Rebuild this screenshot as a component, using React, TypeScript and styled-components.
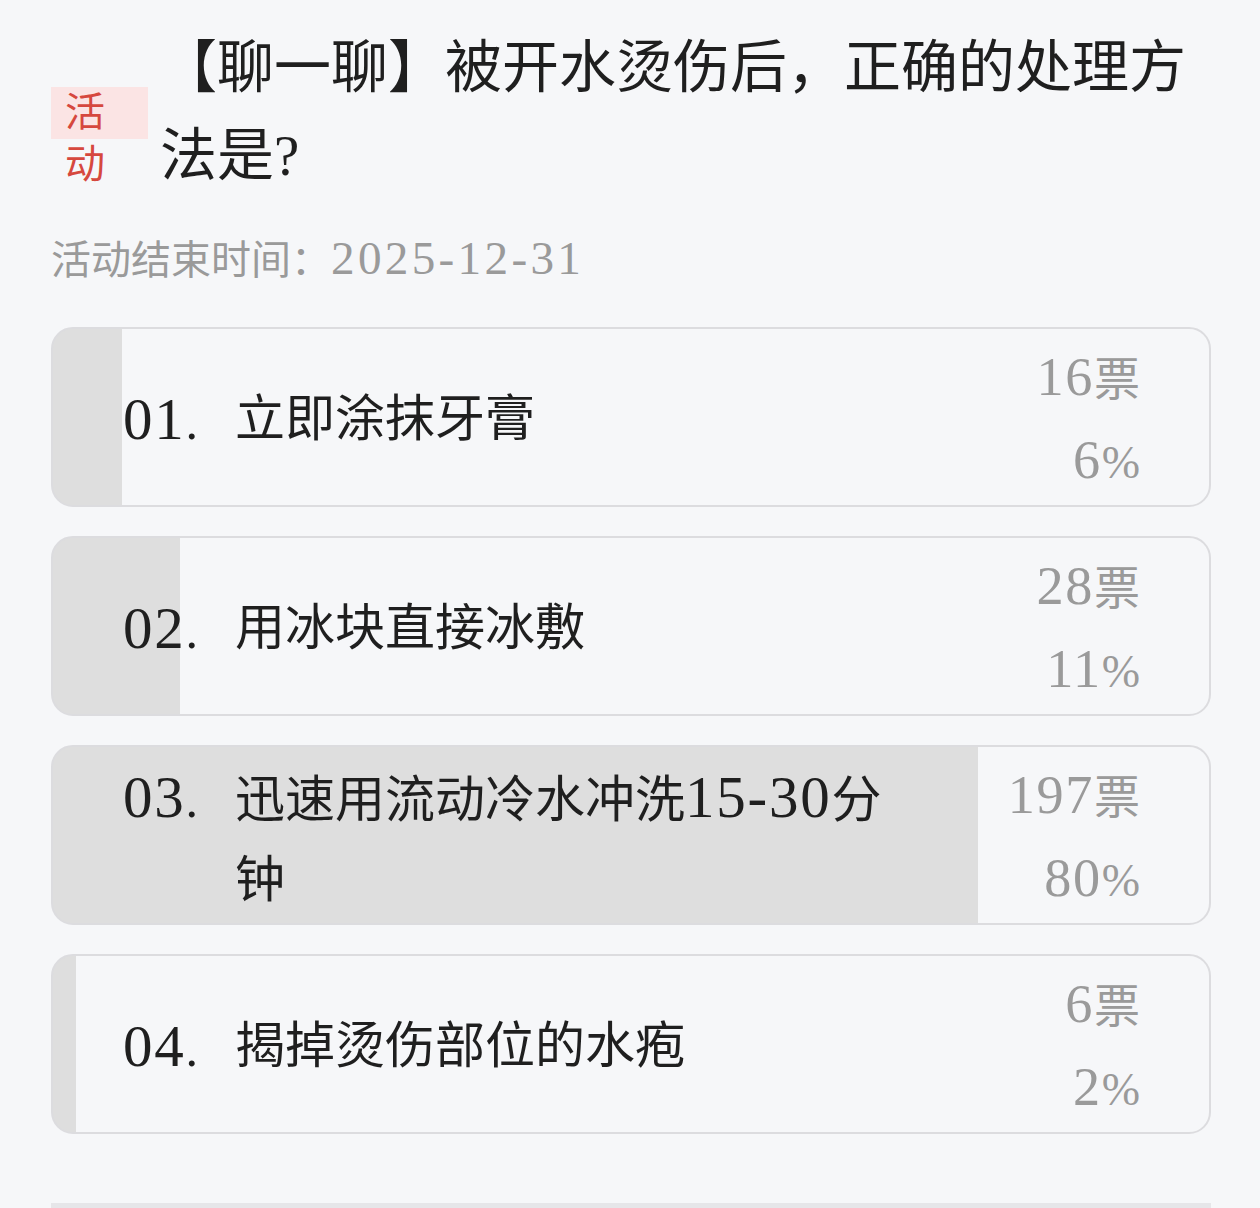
import React from "react";
import styled, { createGlobalStyle } from "styled-components";

const GlobalStyle = createGlobalStyle`
  html, body {
    margin: 0;
    padding: 0;
    background: #f6f7f9;
  }
  body {
    font-family: "Liberation Serif", "Noto Sans CJK SC", serif;
    color: #222;
  }
`;

const Page = styled.div`
  width: 1260px;
  box-sizing: border-box;
  padding: 24px 49px 0 51px;
`;

const Header = styled.div`
  display: flex;
  align-items: flex-start;
  gap: 12px;
`;

const BadgeCol = styled.div`
  width: 97px;
  flex-shrink: 0;
  margin-top: 63px;
  color: #d6483e;
  font-size: 40px;
`;

const BadgeBox = styled.div`
  height: 52px;
  line-height: 52px;
  padding-left: 14px;
  background: #fbe4e4;
`;

const BadgeTail = styled.div`
  line-height: 52px;
  padding-left: 14px;
`;

const Title = styled.h1`
  margin: 0;
  flex: 1;
  font-size: 57px;
  line-height: 88px;
  font-weight: 400;
  color: #1f1f1f;
`;

const EndTime = styled.div`
  margin-top: 30px;
  font-size: 40px;
  line-height: 56px;
  color: #9a9a9a;
`;

const Num = styled.span<{ $spread?: boolean }>`
  font-size: 1.18em;
  white-space: nowrap;
  letter-spacing: ${(p) => (p.$spread ? "0.07em" : "0.03em")};
`;

const List = styled.div`
  margin-top: 38px;
  display: flex;
  flex-direction: column;
  gap: 29px;
`;

const Card = styled.div<{ $pct: number }>`
  height: 180px;
  box-sizing: border-box;
  border: 2px solid #dcdcdf;
  border-radius: 22px;
  overflow: hidden;
  display: flex;
  align-items: center;
  padding: 6px 69px 0 70px;
  background: linear-gradient(
    to right,
    #dedede ${(p) => p.$pct}%,
    #f6f7f9 ${(p) => p.$pct}%
  );
`;

const OptionBody = styled.div`
  flex: 0 1 784px;
  display: flex;
  align-items: flex-start;
`;

const Index = styled.div`
  width: 112px;
  flex-shrink: 0;
  font-size: 50px;
  line-height: 80px;
  color: #1f1f1f;
`;

const OptionText = styled.div`
  flex: 1;
  font-size: 50px;
  line-height: 80px;
  color: #1f1f1f;
`;

const Stats = styled.div`
  margin-left: auto;
  flex-shrink: 0;
  text-align: right;
  font-size: 46px;
  line-height: 80px;
  color: #9a9a9a;
`;

const Footer = styled.div`
  margin-top: 69px;
  height: 40px;
  border-top: 5px solid #e6e6e9;
`;

const withNums = (s: string, spread = false) =>
  s.split(/(\d[\d-]*)/).map((part, i) =>
    /^\d/.test(part) ? (
      <Num key={i} $spread={spread}>
        {part}
      </Num>
    ) : (
      <React.Fragment key={i}>{part}</React.Fragment>
    )
  );

const options = [
  { idx: "01", text: "立即涂抹牙膏", votes: 16, pct: 6 },
  { idx: "02", text: "用冰块直接冰敷", votes: 28, pct: 11 },
  { idx: "03", text: "迅速用流动冷水冲洗15-30分钟", votes: 197, pct: 80 },
  { idx: "04", text: "揭掉烫伤部位的水疱", votes: 6, pct: 2 },
];

export default function App() {
  return (
    <>
      <GlobalStyle />
      <Page>
        <Header>
          <BadgeCol>
            <BadgeBox>活</BadgeBox>
            <BadgeTail>动</BadgeTail>
          </BadgeCol>
          <Title>【聊一聊】被开水烫伤后，正确的处理方法是?</Title>
        </Header>
        <EndTime>活动结束时间：{withNums("2025-12-31", true)}</EndTime>
        <List>
          {options.map((o) => (
            <Card key={o.idx} $pct={o.pct}>
              <OptionBody>
                <Index>
                  <Num>{o.idx}</Num>.
                </Index>
                <OptionText>{withNums(o.text)}</OptionText>
              </OptionBody>
              <Stats>
                <div>
                  <Num>{o.votes}</Num>票
                </div>
                <div>
                  <Num>{o.pct}</Num>%
                </div>
              </Stats>
            </Card>
          ))}
        </List>
        <Footer />
      </Page>
    </>
  );
}
